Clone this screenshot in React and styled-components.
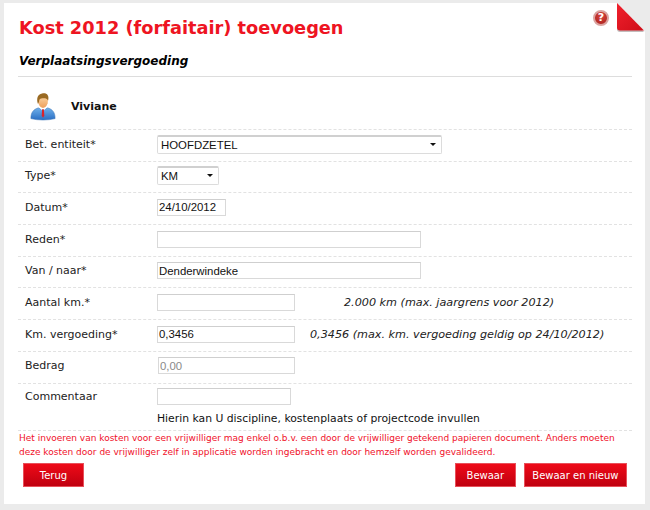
import React from 'react'
import styled, { createGlobalStyle } from 'styled-components'

const GlobalStyle = createGlobalStyle`
  html, body {
    margin: 0;
    padding: 0;
    background: #ebebeb;
  }
  body {
    font-family: "DejaVu Sans", Verdana, sans-serif;
    font-size: 11px;
    color: #111;
  }
`

function PersonIcon() {
  return (
    <svg width="26" height="29" viewBox="0 0 28 30">
      <defs>
        <linearGradient id="suit" x1="0" y1="0" x2="0" y2="1">
          <stop offset="0" stopColor="#6fb0ea" />
          <stop offset="1" stopColor="#2a6fc4" />
        </linearGradient>
        <linearGradient id="skin" x1="0" y1="0" x2="0" y2="1">
          <stop offset="0" stopColor="#fbd3a0" />
          <stop offset="1" stopColor="#ee9f5c" />
        </linearGradient>
      </defs>
      <path d="M1 28 C1 21 4 18 9 16.5 L14 19 L19 16.5 C24 18 27 21 27 28 C20 30 8 30 1 28 Z" fill="url(#suit)" stroke="#2f6db5" strokeWidth="0.6" />
      <path d="M10 16 L14 20 L18 16 L16.5 14 L11.5 14 Z" fill="#fff" />
      <path d="M13 18 L15 18 L15.4 25 L14 27 L12.6 25 Z" fill="#d8242c" />
      <path d="M8.5 7 C8.5 3 19.5 3 19.5 7 L19 11.5 C18 15 16 16.5 14 16.5 C12 16.5 10 15 9 11.5 Z" fill="url(#skin)" />
      <path d="M8.5 12 C6.8 7 8 1.5 13 1 C18 0 21 3 19.5 8.5 C18.5 6.5 16.5 6 13.5 6.2 C11 6.3 10 7 9.8 9 C9.6 10.5 9.2 11.5 8.5 12 Z" fill="#9a6a22" />
    </svg>
  )
}

function Fold() {
  return (
    <svg width="29" height="32" viewBox="0 0 29 32">
      <defs>
        <linearGradient id="fold" x1="0" y1="0" x2="1" y2="1">
          <stop offset="0" stopColor="#f0202c" />
          <stop offset="1" stopColor="#cf0d18" />
        </linearGradient>
      </defs>
      <path d="M1 0 L29 0 L29 29 Z" fill="#ebebeb" />
      <path d="M1 2 L28 29 L4 29 Q1 29 1 26 Z" fill="#7a6a6a" opacity="0.45" />
      <path d="M1 0 L28 27.5 L4 27.5 Q1 27.5 1 24.5 Z" fill="url(#fold)" />
    </svg>
  )
}

function Row({ label, children, tall }) {
  return (
    <FormRow $tall={tall}>
      <Label $tall={tall}>{label}</Label>
      <Controls>{children}</Controls>
    </FormRow>
  )
}

export default function App() {
  return (
    <>
      <GlobalStyle />
      <Panel>
        <HelpIcon>?</HelpIcon>
        <FoldCorner>
          <Fold />
        </FoldCorner>

        <Title>Kost 2012 (forfaitair) toevoegen</Title>
        <SubTitle>Verplaatsingsvergoeding</SubTitle>

        <PersonRow>
          <PersonIcon />
          <PersonName>Viviane</PersonName>
        </PersonRow>

        <Row label="Bet. entiteit*">
          <SelectWrap $width={285}>
            <Select defaultValue="HOOFDZETEL">
              <option>HOOFDZETEL</option>
            </Select>
          </SelectWrap>
        </Row>
        <Row label="Type*">
          <SelectWrap $width={62}>
            <Select defaultValue="KM">
              <option>KM</option>
            </Select>
          </SelectWrap>
        </Row>
        <Row label="Datum*">
          <Input $width={69} defaultValue="24/10/2012" />
        </Row>
        <Row label="Reden*">
          <Input $width={264} />
        </Row>
        <Row label="Van / naar*">
          <Input $width={264} defaultValue="Denderwindeke" />
        </Row>
        <Row label="Aantal km.*">
          <Input $width={138} />
          <Hint $left={49}>2.000 km (max. jaargrens voor 2012)</Hint>
        </Row>
        <Row label="Km. vergoeding*">
          <Input $width={138} defaultValue="0,3456" />
          <Hint $left={15}>0,3456 (max. km. vergoeding geldig op 24/10/2012)</Hint>
        </Row>
        <Row label="Bedrag">
          <Input $width={137} $indent={1} defaultValue="0,00" disabled />
        </Row>
        <Row label="Commentaar" tall>
          <Stack>
            <Input $width={134} />
            <Note>Hierin kan U discipline, kostenplaats of projectcode invullen</Note>
          </Stack>
        </Row>

        <Warning>
          Het invoeren van kosten voor een vrijwilliger mag enkel o.b.v. een door de vrijwilliger getekend papieren document. Anders moeten
          <br />
          deze kosten door de vrijwilliger zelf in applicatie worden ingebracht en door hemzelf worden gevalideerd.
        </Warning>

        <Footer>
          <Button>Terug</Button>
          <FooterRight>
            <Button>Bewaar</Button>
            <Button>Bewaar en nieuw</Button>
          </FooterRight>
        </Footer>
      </Panel>
    </>
  )
}

const Panel = styled.div`
  position: relative;
  box-sizing: border-box;
  width: 641px;
  height: 501px;
  margin: 3px 0 0 4px;
  padding: 0 13px 0 14px;
  background: #fff;
`

const HelpIcon = styled.div`
  position: absolute;
  top: 7px;
  left: 589px;
  box-sizing: border-box;
  width: 16px;
  height: 16px;
  border-radius: 50%;
  border: 2px solid #dba3a0;
  background: radial-gradient(circle at 50% 35%, #d8453e, #a81e1a);
  color: #fff;
  font-size: 11px;
  font-weight: bold;
  line-height: 12px;
  text-align: center;
`

const FoldCorner = styled.div`
  position: absolute;
  top: 0;
  right: 0;
  width: 29px;
  height: 32px;

  svg {
    display: block;
  }
`

const Title = styled.h1`
  margin: 0;
  padding: 14px 0 0 1px;
  font-size: 17.75px;
  line-height: 23px;
  font-weight: bold;
  color: #ee1422;
`

const SubTitle = styled.h2`
  margin: 0;
  padding: 13px 0 6px 1px;
  font-size: 12px;
  line-height: 17px;
  font-style: italic;
  font-weight: bold;
  color: #000;
  border-bottom: 1px solid #dddddd;
`

const PersonRow = styled.div`
  display: flex;
  align-items: center;
  height: 53px;
  box-sizing: border-box;
  padding: 6px 0 0 12px;
  border-bottom: 1px dashed #e2e2e2;
`

const PersonName = styled.span`
  margin-left: 15px;
  font-weight: bold;
  font-size: 11px;
`

const FormRow = styled.div`
  display: grid;
  grid-template-columns: 132px 1fr;
  box-sizing: border-box;
  height: ${({ $tall }) => ($tall ? '47.6px' : '31.7px')};
  padding: 0 0 2.5px 7px;
  align-items: ${({ $tall }) => ($tall ? 'start' : 'center')};
  border-bottom: 1px dashed #e2e2e2;
`

const Label = styled.label`
  font-size: 11px;
  color: #222;
  padding-top: ${({ $tall }) => ($tall ? '6px' : '0')};
`

const Controls = styled.div`
  display: flex;
  align-items: center;
`

const Stack = styled.div`
  display: flex;
  flex-direction: column;
  padding-top: 4px;
`

const Input = styled.input`
  box-sizing: border-box;
  width: ${({ $width }) => $width}px;
  margin-left: ${({ $indent }) => $indent || 0}px;
  height: 17px;
  padding: 0 1px;
  border: 1px solid #d9d9d9;
  border-top-color: #cfcfcf;
  outline: none;
  background: #fff;
  font-family: "Liberation Sans", Arial, sans-serif;
  font-size: 11.4px;
  color: #111;

  &:disabled {
    color: #8a8a8a;
    background: #fff;
  }
`

const SelectWrap = styled.div`
  position: relative;
  width: ${({ $width }) => $width}px;

  &::after {
    content: '';
    position: absolute;
    right: 6px;
    top: 8px;
    border-left: 3px solid transparent;
    border-right: 3px solid transparent;
    border-top: 3px solid #111;
    pointer-events: none;
  }
`

const Select = styled.select`
  display: block;
  box-sizing: border-box;
  width: 100%;
  height: 19px;
  padding: 0 3px;
  appearance: none;
  border: 1px solid #dcdcdc;
  border-top: 2px solid #d0d0d0;
  border-radius: 2px;
  outline: none;
  background: #fff;
  font-family: "Liberation Sans", Arial, sans-serif;
  font-size: 11.4px;
  color: #111;
`

const Hint = styled.span`
  margin-left: ${({ $left }) => $left}px;
  font-style: italic;
  font-size: 11.2px;
  white-space: nowrap;
  color: #222;
`

const Note = styled.div`
  margin-top: 7px;
  font-size: 10.8px;
  white-space: nowrap;
  color: #111;
`

const Warning = styled.p`
  margin: 0;
  padding: 1px 0 0 1px;
  font-size: 9px;
  line-height: 13.5px;
  white-space: nowrap;
  color: #f0102a;
`

const Footer = styled.div`
  display: flex;
  justify-content: space-between;
  padding: 4px 5px 0;
`

const FooterRight = styled.div`
  display: flex;
  gap: 8px;
`

const Button = styled.button`
  box-sizing: border-box;
  height: 24px;
  padding: 0 7.5px;
  min-width: 61px;
  border: 1px solid #e8505a;
  background: linear-gradient(#ee0a18, #c00010);
  color: #fff;
  font-family: inherit;
  font-size: 10px;
  white-space: nowrap;
`
